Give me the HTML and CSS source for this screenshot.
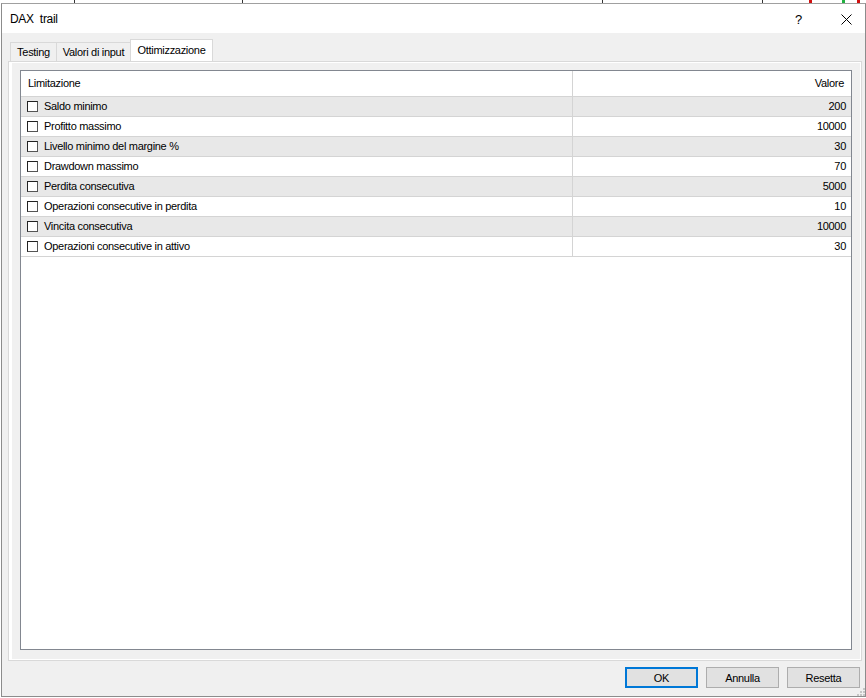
FILE: index.html
```html
<!DOCTYPE html>
<html lang="it">
<head>
<meta charset="utf-8">
<title>DAX trail</title>
<link rel="stylesheet" href="styles.css">
</head>
<body>
<div class="backdrop"></div>
<div class="dialog">
  <div class="titlebar">
    <span class="title">DAX&nbsp; trail</span>
    <span class="help">?</span>
    <svg class="close" width="11" height="11" viewBox="0 0 11 11"><path d="M0.5 0.5 L10.5 10.5 M10.5 0.5 L0.5 10.5" stroke="#000" stroke-width="1" fill="none"/></svg>
  </div>
  <div class="body">
    <div class="tabs">
      <div class="tab t1">Testing</div>
      <div class="tab t2">Valori di input</div>
      <div class="tab t3 active">Ottimizzazione</div>
    </div>
    <div class="panel">
      <div class="page">
        <div class="grid">
          <div class="row head">
            <div class="c1">Limitazione</div>
            <div class="c2">Valore</div>
          </div>
          <div class="row odd"><div class="c1"><span class="cb"></span>Saldo minimo</div><div class="c2">200</div></div>
          <div class="row"><div class="c1"><span class="cb"></span>Profitto massimo</div><div class="c2">10000</div></div>
          <div class="row odd"><div class="c1"><span class="cb"></span>Livello minimo del margine %</div><div class="c2">30</div></div>
          <div class="row"><div class="c1"><span class="cb"></span>Drawdown massimo</div><div class="c2">70</div></div>
          <div class="row odd"><div class="c1"><span class="cb"></span>Perdita consecutiva</div><div class="c2">5000</div></div>
          <div class="row"><div class="c1"><span class="cb"></span>Operazioni consecutive in perdita</div><div class="c2">10</div></div>
          <div class="row odd"><div class="c1"><span class="cb"></span>Vincita consecutiva</div><div class="c2">10000</div></div>
          <div class="row"><div class="c1"><span class="cb"></span>Operazioni consecutive in attivo</div><div class="c2">30</div></div>
        </div>
      </div>
    </div>
    <div class="buttons">
      <button class="btn default">OK</button>
      <button class="btn">Annulla</button>
      <button class="btn">Resetta</button>
    </div>
    <svg class="grip" width="8" height="8" viewBox="0 0 8 8">
      <rect x="6" y="0" width="2" height="2" fill="#c6c6c6"/>
      <rect x="3" y="3" width="2" height="2" fill="#c6c6c6"/>
      <rect x="6" y="3" width="2" height="2" fill="#c6c6c6"/>
      <rect x="0" y="6" width="2" height="2" fill="#c6c6c6"/>
      <rect x="3" y="6" width="2" height="2" fill="#c6c6c6"/>
      <rect x="6" y="6" width="2" height="2" fill="#c6c6c6"/>
    </svg>
  </div>
</div>
</body>
</html>
```

FILE: styles.css
```css
html, body {
  margin: 0;
  padding: 0;
}
body {
  width: 866px;
  height: 698px;
  background: #ffffff;
  font-family: "Liberation Sans", Arial, sans-serif;
  font-size: 11px;
  color: #000;
  position: relative;
  overflow: hidden;
}
.backdrop {
  position: absolute;
  left: 0;
  top: 0;
  width: 866px;
  height: 3px;
  background:
    linear-gradient(#333, #333) 74px 0 / 1px 3px no-repeat,
    linear-gradient(#333, #333) 242px 0 / 1px 3px no-repeat,
    linear-gradient(#333, #333) 602px 0 / 1px 3px no-repeat,
    linear-gradient(#333, #333) 762px 0 / 1px 3px no-repeat,
    linear-gradient(#d01010, #d01010) 809px 0 / 3px 3px no-repeat,
    linear-gradient(#20b040, #20b040) 842px 0 / 3px 3px no-repeat,
    linear-gradient(#d01010, #d01010) 857px 0 / 3px 3px no-repeat;
}
.dialog {
  margin: 3px 0 0 1px;
  width: 865px;
  height: 694px;
  box-sizing: border-box;
  border: 1px solid #8c8c8c;
  border-top-color: #a0a0a0;
  display: flex;
  flex-direction: column;
  background: #f0f0f0;
}
.titlebar {
  height: 29px;
  background: #fff;
  display: flex;
  align-items: center;
  padding-left: 8px;
  flex: none;
}
.title {
  font-size: 12px;
  letter-spacing: -0.3px;
  flex: 1;
  padding-top: 1px;
}
.help {
  font-size: 13px;
  width: 10px;
  margin-right: 36px;
  padding-top: 1px;
}
.close {
  margin-right: 13px;
  margin-top: 1px;
}
.body {
  flex: 1;
  padding: 6px 3px 0 6px;
  display: flex;
  flex-direction: column;
  position: relative;
}
.tabs {
  height: 22px;
  display: flex;
  align-items: flex-end;
  padding-left: 2px;
  flex: none;
}
.tab {
  box-sizing: border-box;
  height: 19px;
  border: 1px solid #d9d9d9;
  border-bottom: none;
  margin-right: -1px;
  text-align: center;
  line-height: 18px;
  letter-spacing: -0.3px;
  background: #f0f0f0;
}
.t1 { width: 47px; }
.t2 { width: 75px; }
.t3 { width: 83px; }
.tab.active {
  height: 22px;
  background: #fff;
  line-height: 20px;
  position: relative;
  z-index: 1;
}
.panel {
  height: 600px;
  box-sizing: border-box;
  border: 1px solid #d9d9d9;
  background: #fff;
  padding: 1px 1px 1px 3px;
  flex: none;
}
.page {
  height: 100%;
  box-sizing: border-box;
  background: #f0f0f0;
  padding: 7px 8px 9px 8px;
}
.grid {
  height: 100%;
  box-sizing: border-box;
  border: 1px solid #828790;
  background: #fff;
}
.row {
  display: grid;
  grid-template-columns: 552px 1fr;
  height: 20px;
  box-sizing: border-box;
  border-bottom: 1px solid #d4d4d4;
  letter-spacing: -0.3px;
}
.row.odd { background: #e8e8e8; }
.row.head {
  height: 26px;
  background: #fff;
}
.c1 {
  border-right: 1px solid #d4d4d4;
  display: flex;
  align-items: center;
  padding-left: 6px;
  padding-bottom: 1px;
}
.head .c1 { padding-left: 7px; }
.c2 {
  display: flex;
  align-items: center;
  justify-content: flex-end;
  padding-right: 5px;
  padding-bottom: 1px;
}
.head .c2 { padding-right: 7px; }
.cb {
  width: 11px;
  height: 11px;
  box-sizing: border-box;
  border: 1px solid #222;
  border-right-color: #555;
  border-bottom-color: #555;
  background: #fff;
  margin-right: 6px;
  flex: none;
}
.buttons {
  display: flex;
  justify-content: flex-end;
  gap: 8px;
  margin-top: 6px;
  padding-right: 2px;
}
.btn {
  width: 73px;
  height: 21px;
  box-sizing: border-box;
  border: 1px solid #adadad;
  background: #e1e1e1;
  font-family: "Liberation Sans", Arial, sans-serif;
  font-size: 11px;
  letter-spacing: -0.3px;
  color: #000;
  padding: 0;
}
.btn.default {
  border: 2px solid #0078d7;
}
.grip {
  position: absolute;
  right: 0;
  bottom: 0;
}
```
